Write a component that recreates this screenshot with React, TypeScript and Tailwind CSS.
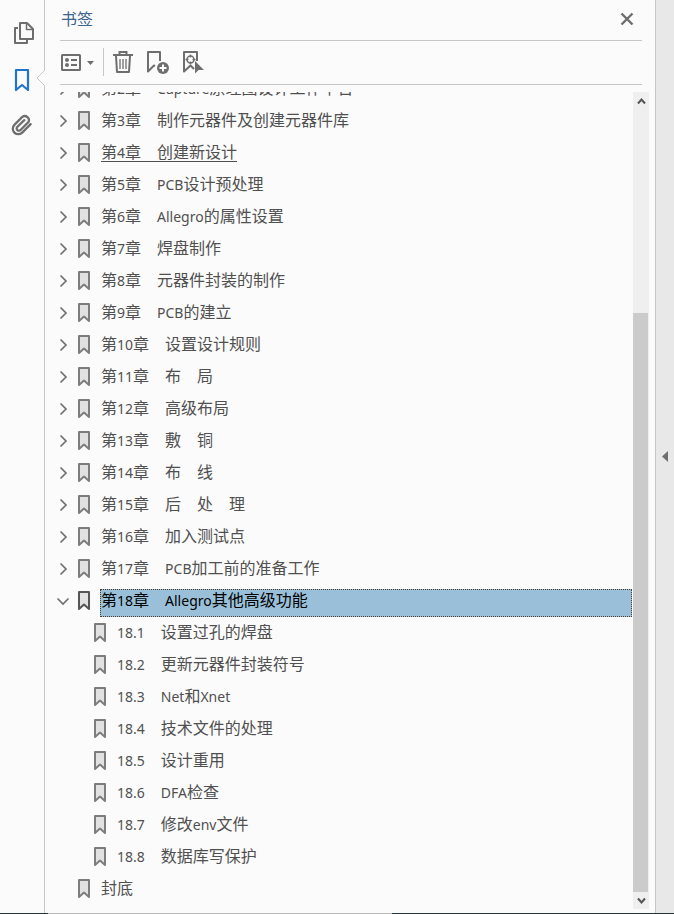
import { useState } from "react";

type Bookmark = {
  id: string;
  title: string;
  expandable?: boolean;
  children?: Bookmark[];
};

const bookmarks: Bookmark[] = [
  { id: "2", title: "第2章　Capture原理图设计工作平台", expandable: true },
  { id: "3", title: "第3章　制作元器件及创建元器件库", expandable: true },
  { id: "4", title: "第4章　创建新设计", expandable: true },
  { id: "5", title: "第5章　PCB设计预处理", expandable: true },
  { id: "6", title: "第6章　Allegro的属性设置", expandable: true },
  { id: "7", title: "第7章　焊盘制作", expandable: true },
  { id: "8", title: "第8章　元器件封装的制作", expandable: true },
  { id: "9", title: "第9章　PCB的建立", expandable: true },
  { id: "10", title: "第10章　设置设计规则", expandable: true },
  { id: "11", title: "第11章　布　局", expandable: true },
  { id: "12", title: "第12章　高级布局", expandable: true },
  { id: "13", title: "第13章　敷　铜", expandable: true },
  { id: "14", title: "第14章　布　线", expandable: true },
  { id: "15", title: "第15章　后　处　理", expandable: true },
  { id: "16", title: "第16章　加入测试点", expandable: true },
  { id: "17", title: "第17章　PCB加工前的准备工作", expandable: true },
  {
    id: "18",
    title: "第18章　Allegro其他高级功能",
    expandable: true,
    children: [
      { id: "18.1", title: "18.1　设置过孔的焊盘" },
      { id: "18.2", title: "18.2　更新元器件封装符号" },
      { id: "18.3", title: "18.3　Net和Xnet" },
      { id: "18.4", title: "18.4　技术文件的处理" },
      { id: "18.5", title: "18.5　设计重用" },
      { id: "18.6", title: "18.6　DFA检查" },
      { id: "18.7", title: "18.7　修改env文件" },
      { id: "18.8", title: "18.8　数据库写保护" },
    ],
  },
  { id: "back", title: "封底" },
];

// Latin runs are set a little smaller than the Chinese around them
function Title({ text }: { text: string }) {
  return (
    <>
      {text.split(/([A-Za-z0-9.]+)/).map((part, i) =>
        i % 2 === 1 ? (
          <span key={i} className="text-[14px]">
            {part}
          </span>
        ) : (
          part
        ),
      )}
    </>
  );
}

function BookmarkGlyph({ active }: { active: boolean }) {
  return (
    <svg
      width="12"
      height="20"
      viewBox="0 0 12 20"
      className={`shrink-0 ${active ? "text-[#555555]" : "text-[#7d7d7d]"}`}
      aria-hidden="true"
    >
      <path
        d="M1 1h10v17l-5-4.500-5 4.500z"
        fill="#e1e1e1"
        stroke="currentColor"
        strokeWidth="2"
        strokeLinejoin="round"
      />
    </svg>
  );
}

function Chevron({ open }: { open: boolean }) {
  return (
    <svg width="14" height="14" viewBox="0 0 14 14" fill="none" stroke="#707070" strokeWidth="1.7" aria-hidden="true">
      <path d={open ? "M1.500 4.500L7 10l5.500-5.500" : "M4.500 1.500L10 7l-5.500 5.500"} />
    </svg>
  );
}

interface RowProps {
  item: Bookmark;
  depth: number;
  selected: string;
  open: Set<string>;
  onSelect: (id: string) => void;
  onToggle: (id: string) => void;
}

function BookmarkRow({ item, depth, selected, open, onSelect, onToggle }: RowProps) {
  const isSelected = selected === item.id;
  const isOpen = open.has(item.id);

  return (
    <li>
      <div className={`flex h-8 items-center ${depth > 0 ? "pl-4" : ""}`}>
        {item.expandable ? (
          <button
            onClick={() => onToggle(item.id)}
            aria-label={isOpen ? "折叠" : "展开"}
            aria-expanded={isOpen}
            className="mr-2 flex h-5 w-[14px] shrink-0 items-center justify-center"
          >
            <Chevron open={isOpen} />
          </button>
        ) : (
          <span className="w-[22px] shrink-0" />
        )}
        <BookmarkGlyph active={isSelected} />
        <button
          onClick={() => onSelect(item.id)}
          className={`ml-[10px] h-7 min-w-0 flex-1 self-end truncate border border-dotted pb-1.5 text-left text-[16px] leading-5 ${
            isSelected
              ? "border-[#4d3a30] bg-[#9ac0d9] text-black"
              : "border-transparent text-[#505050]"
          } ${item.id === "4" ? "underline underline-offset-3" : ""}`}
        >
          <Title text={item.title} />
        </button>
      </div>
      {item.children && isOpen && (
        <ul>
          {item.children.map((child) => (
            <BookmarkRow
              key={child.id}
              item={child}
              depth={depth + 1}
              selected={selected}
              open={open}
              onSelect={onSelect}
              onToggle={onToggle}
            />
          ))}
        </ul>
      )}
    </li>
  );
}

function NavRail() {
  return (
    <nav className="relative flex w-[45px] shrink-0 flex-col items-center border-r border-[#c6c6c6] pt-5">
      <button aria-label="页面缩略图" className="flex h-[26px] w-7 items-center justify-end">
        <svg width="24" height="24" viewBox="0 0 24 24" fill="none" stroke="#6e6e6e" strokeWidth="2" strokeLinejoin="round">
          <path d="M6 7H3v15h12v-3" />
          <path d="M8 2h7l6 6v10H8z" />
          <path d="M14.500 2v6.500H21" strokeWidth="1.500" />
        </svg>
      </button>
      <button aria-label="书签" className="mt-5 flex h-7 w-7 items-center justify-center">
        <svg width="16" height="24" viewBox="0 0 16 24" fill="none" stroke="#2074c9" strokeWidth="2.200" strokeLinejoin="round">
          <path d="M2 2h12v20l-6-5-6 5z" />
        </svg>
      </button>
      <button aria-label="附件" className="mt-[17px] flex h-7 w-7 items-center justify-center">
        <svg width="22" height="22" viewBox="0 0 24 24" fill="none" stroke="#6e6e6e" strokeWidth="2.500" strokeLinecap="round">
          <path d="M21.400 11.100l-9.200 9.200a6 6 0 0 1-8.500-8.500l8.600-8.600a4.500 4.500 0 0 1 6.700 5.700l-8.600 8.500a2.400 2.400 0 0 1-3.600-3.200l7.700-7.500" />
        </svg>
      </button>
      {/* notch that points at the open panel's button */}
      <svg width="9" height="16" viewBox="0 0 9 16" className="absolute -right-px top-[70px]" aria-hidden="true">
        <path d="M9 0v16L1 8z" fill="#fbfbfb" />
        <path d="M8.500 0.500L1 8l7.500 7.500" fill="none" stroke="#c6c6c6" />
      </svg>
    </nav>
  );
}

function Toolbar() {
  return (
    <div className="mr-[13px] flex h-11 items-center border-b border-[#c6c6c6] pb-px">
      <button aria-label="选项" className="flex items-center">
        <svg width="36" height="20" viewBox="0 0 36 20" fill="none">
          <rect x="2" y="3" width="18" height="15" rx="0.500" stroke="#6e6e6e" strokeWidth="2" />
          <circle cx="7" cy="8" r="2" fill="#6e6e6e" />
          <circle cx="7" cy="13" r="2" fill="#6e6e6e" />
          <path d="M11 8h6M11 13h6" stroke="#6e6e6e" strokeWidth="2" />
          <path d="M27 9h7l-3.500 4z" fill="#6e6e6e" />
        </svg>
      </button>
      <span className="ml-[7px] h-7 w-px bg-[#c6c6c6]" />
      <button aria-label="删除" className="ml-2">
        <svg width="22" height="24" viewBox="0 0 22 24" fill="none" stroke="#6e6e6e">
          <path d="M1 5h20" strokeWidth="2" />
          <path d="M7.500 4V2h7v2" strokeWidth="2" />
          <path d="M4 6l1 16h12l1-16" strokeWidth="2" strokeLinejoin="round" />
          <path d="M8 9v10M11 9v10M14 9v10" strokeWidth="1.300" />
        </svg>
      </button>
      <button aria-label="新建书签" className="ml-3">
        <svg width="24" height="24" viewBox="0 0 24 24" fill="none">
          <path d="M9 16l-1-0.500-6 6V2h12v9" stroke="#6e6e6e" strokeWidth="2" strokeLinejoin="round" />
          <circle cx="17" cy="18" r="6" fill="#6e6e6e" />
          <path d="M17 14.500v7M13.500 18h7" stroke="#fbfbfb" strokeWidth="2" />
        </svg>
      </button>
      <button aria-label="查找当前书签" className="ml-3">
        <svg width="22" height="24" viewBox="0 0 22 24" fill="none">
          <path d="M12 19l-3.500-3.500-6.500 6V2h13v9" stroke="#6e6e6e" strokeWidth="2" strokeLinejoin="round" />
          <circle cx="8.500" cy="9.500" r="3.500" stroke="#6e6e6e" strokeWidth="1.500" />
          <path d="M8.500 4.500v3M8.500 11.500v3M3.500 9.500h3M10.500 9.500h3" stroke="#6e6e6e" strokeWidth="1.300" />
          <path d="M13 11v12.500l3.500-3.500H22z" fill="#6e6e6e" />
        </svg>
      </button>
    </div>
  );
}

function Scrollbar() {
  return (
    <div className="mr-[6px] flex w-4 shrink-0 flex-col bg-[#efefef]" aria-hidden="true">
      <div className="flex h-[17px] items-center justify-center">
        <svg width="9" height="8" viewBox="0 0 9 8" fill="none" stroke="#555555" strokeWidth="2">
          <path d="M1 6.500L4.500 2.500L8 6.500" />
        </svg>
      </div>
      <div className="flex-[204]" />
      <div className="mr-px flex-[579] bg-[#cbcbcb]" />
      <div className="flex h-[17px] items-center justify-center">
        <svg width="9" height="8" viewBox="0 0 9 8" fill="none" stroke="#555555" strokeWidth="2">
          <path d="M1 1.500L4.500 5.500L8 1.500" />
        </svg>
      </div>
    </div>
  );
}

export default function App() {
  const [selected, setSelected] = useState("18");
  const [open, setOpen] = useState<Set<string>>(new Set(["18"]));

  const toggle = (id: string) => {
    const next = new Set(open);
    if (next.has(id)) {
      next.delete(id);
    } else {
      next.add(id);
    }
    setOpen(next);
  };

  return (
    <div className="flex h-screen flex-col overflow-hidden bg-[#fbfbfb] font-['Noto_Sans','Noto_Sans_CJK_SC',sans-serif]">
      <div className="flex min-h-0 flex-1">
        <NavRail />
        <section className="flex min-w-0 flex-1 flex-col pl-[15px]">
          <header className="mr-[13px] flex h-[41px] items-center justify-between border-b border-[#c6c6c6] pb-0.5">
            <h1 className="pl-px text-[16px] leading-5 text-[#3c648c]">书签</h1>
            <button aria-label="关闭" className="mr-2 flex h-5 w-[14px] items-center justify-center">
              <svg width="14" height="14" viewBox="0 0 14 14" stroke="#6e6e6e" strokeWidth="2.400">
                <path d="M1.500 1.500l11 11M12.500 1.500l-11 11" />
              </svg>
            </button>
          </header>
          <Toolbar />
          <div className="-ml-1 mb-1 mt-[7px] flex min-h-0 flex-1">
            {/* the list is scrolled, so its first row is partly out of view */}
            <div className="mr-px min-w-0 flex-1 overflow-hidden">
              <ul className="-mt-[19px]">
                {bookmarks.map((item) => (
                  <BookmarkRow
                    key={item.id}
                    item={item}
                    depth={0}
                    selected={selected}
                    open={open}
                    onSelect={setSelected}
                    onToggle={toggle}
                  />
                ))}
              </ul>
            </div>
            <Scrollbar />
          </div>
        </section>
        <aside className="flex w-[19px] shrink-0 items-center justify-center border-l border-[#c6c6c6] bg-[#e8e8e8]">
          <button aria-label="收起面板">
            <svg width="6" height="11" viewBox="0 0 6 11">
              <path d="M6 0v11L0 5.500z" fill="#6e6e6e" />
            </svg>
          </button>
        </aside>
      </div>
      <div className="flex h-px shrink-0 justify-between bg-[#b9b9b9]">
        <div className="w-12 bg-[#24343c]" />
        <div className="w-[282px] bg-[#24343c]" />
      </div>
    </div>
  );
}
